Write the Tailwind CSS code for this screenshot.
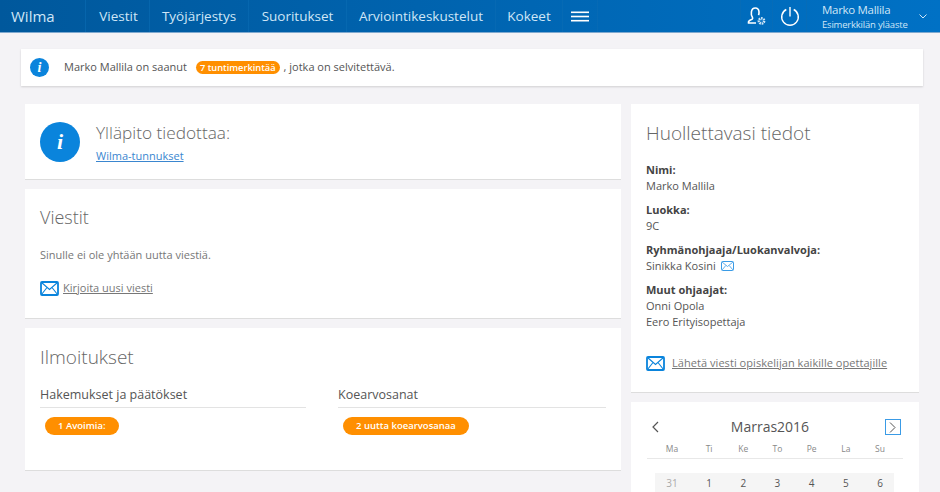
<!DOCTYPE html>
<html lang="fi">
<head>
    <meta charset="UTF-8">
    <title>Wilma</title>
    <script src="https://cdn.jsdelivr.net/npm/@tailwindcss/browser@4"></script>
</head>
<body class="h-[492px] overflow-hidden bg-[#f4f3f6] font-['Open_Sans',sans-serif] text-[11px] text-[#555]">
    <!-- Top bar -->
    <header class="flex h-[33px] border-b border-[#7fa9cf] bg-gradient-to-r from-[#00589c] to-[#0071c5] text-[13.5px] text-[#cfe6f7]">
        <a class="flex w-[86px] items-center border-r border-[#0a6cb4]/60 pl-[11px] text-[15px]">Wilma</a>
        <a class="flex w-[64px] items-center justify-center border-r border-[#0a6cb4]/60 pl-[2px]">Viestit</a>
        <a class="flex w-[99px] items-center justify-center border-r border-[#0a6cb4]/60">Työjärjestys</a>
        <a class="flex w-[98px] items-center justify-center border-r border-[#0a6cb4]/60">Suoritukset</a>
        <a class="flex w-[149px] items-center justify-center border-r border-[#0a6cb4]/60">Arviointikeskustelut</a>
        <a class="flex w-[67px] items-center justify-center border-r border-[#0a6cb4]/60">Kokeet</a>
        <a class="flex w-[35px] items-center justify-center border-r border-[#0a6cb4]/60">
            <svg width="18" height="11" viewBox="0 0 18 11" fill="#fff"><rect width="18" height="1.6" y="0.5"/><rect width="18" height="1.6" y="4.7"/><rect width="18" height="1.6" y="8.9"/></svg>
        </a>
        <div class="flex-1"></div>
        <a class="flex w-[33px] items-center justify-center border-x border-[#0a6cb4]/60">
            <svg width="21" height="21" viewBox="0 0 21 21" fill="none" stroke="#fff" stroke-width="1.6">
                <path d="M10 17H2.500c-.3-1.600.6-2.700 2.500-3.300 1.400-.4 1.900-1.100 1.500-2.200C5.500 10 5 8 5.400 5.800 5.800 3.500 7.400 2 9.300 2c2 0 3.500 1.500 3.700 3.800.1 1.300 0 2.300-.5 3.400"/>
                <circle cx="15.500" cy="15" r="2.600" stroke="#cfe6f7" stroke-width="2.600" stroke-dasharray="1.500 0.800"/>
                <circle cx="15.500" cy="15" r="1" fill="#1a7cc9" stroke="none"/>
            </svg>
        </a>
        <a class="flex w-[34px] items-center justify-center border-r border-[#0a6cb4]/60 pl-[1px]">
            <svg width="20" height="20" viewBox="0 0 20 20" fill="none" stroke="#fff" stroke-width="1.400">
                <path d="M6.300 3.500a8.300 8.300 0 1 0 7.400 0"/>
                <path d="M10 1v9.500"/>
            </svg>
        </a>
        <div class="flex w-[133px] items-center pl-[15px] pt-[1px]">
            <div class="w-[94px] leading-none">
                <div class="whitespace-nowrap text-[11.5px] leading-[15px] tracking-[-0.3px]">Marko Mallila</div>
                <div class="whitespace-nowrap text-[9.5px] leading-[15px] tracking-[-0.2px]">Esimerkkilän yläaste</div>
            </div>
            <svg class="ml-[3px]" width="8" height="5" viewBox="0 0 8 5" fill="none" stroke="#cfe6f7"><path d="M.5.500 4 4 7.500.500"/></svg>
        </div>
    </header>

    <!-- Notice -->
    <div class="ml-[21px] mt-4 flex h-[37px] w-[902px] items-center bg-white pl-[9px] shadow-[0_1px_2px_rgba(0,0,0,0.15)]">
        <span class="flex h-[19px] w-[19px] items-center justify-center rounded-full bg-[#0a84dc] font-['Liberation_Serif',serif] text-[14px] font-bold italic text-white">i</span>
        <span class="ml-[15px]">Marko Mallila on saanut</span>
        <span class="ml-[9px] rounded-full bg-[#ff8f00] px-[4px] text-[9.25px] font-semibold leading-[13px] text-white">7 tuntimerkintää</span>
        <span class="ml-[4px]">, jotka on selvitettävä.</span>
    </div>

    <div class="ml-[25px] mt-[18px] flex w-[894px] gap-[10px]">
        <!-- Left column -->
        <main class="flex w-[596px] flex-col gap-[10px]">
            <section class="flex h-[75px] items-center bg-white pl-[15px] shadow-[0_1px_0_#ddd]">
                <span class="flex h-10 w-10 items-center justify-center rounded-full bg-[#0a84dc] font-['Liberation_Serif',serif] text-[22px] font-bold italic text-white">i</span>
                <div class="ml-4">
                    <h2 class="text-[17.25px] font-light leading-[24px] text-[#666]">Ylläpito tiedottaa:</h2>
                    <a class="mt-[3px] block text-[11px] leading-[15px] text-[#3a86cf] underline">Wilma-tunnukset</a>
                </div>
            </section>

            <section class="h-[129px] bg-white pl-[15px] pt-[15px] shadow-[0_1px_0_#ddd]">
                <h2 class="text-[18px] font-light leading-[26px] text-[#666]">Viestit</h2>
                <p class="mt-[17px] leading-[16px] text-[#777]">Sinulle ei ole yhtään uutta viestiä.</p>
                <a class="mt-[17px] flex items-center text-[#777] underline">
                    <svg class="mr-[4px]" width="19" height="15" viewBox="0 0 19 15" fill="none" stroke="#0a84dc" stroke-width="1.800"><rect x="1" y="1" width="17" height="13" rx="1"/><path d="M1.500 1.500 9.500 8.500 17.500 1.500M1.500 13.500 7 6.500M17.500 13.500 12 6.500" stroke-width="1.100"/></svg>
                    Kirjoita uusi viesti
                </a>
            </section>

            <section class="h-[142px] bg-white px-[15px] pt-[16px] shadow-[0_1px_0_#ddd]">
                <h2 class="text-[19px] font-light leading-[26px] text-[#666]">Ilmoitukset</h2>
                <div class="mt-[16px] grid grid-cols-[266px_268px] gap-[32px]">
                    <div>
                        <h3 class="border-b border-[#e3e3e3] pb-[3px] text-[12.500px] leading-[18px] text-[#555]">Hakemukset ja päätökset</h3>
                        <span class="ml-[5px] mt-[9px] inline-block rounded-full bg-[#ff8f00] px-[13px] text-[9.500px] font-semibold leading-[18px] text-white">1 Avoimia:</span>
                    </div>
                    <div>
                        <h3 class="border-b border-[#e3e3e3] pb-[3px] text-[12.500px] leading-[18px] text-[#555]">Koearvosanat</h3>
                        <span class="ml-[5px] mt-[9px] inline-block rounded-full bg-[#ff8f00] px-[13px] text-[9.500px] font-semibold leading-[18px] text-white">2 uutta koearvosanaa</span>
                    </div>
                </div>
            </section>
        </main>

        <!-- Right column -->
        <aside class="flex w-[288px] flex-col gap-[10px]">
            <section class="h-[288px] bg-white pl-[15px] pr-4 pt-[16px] shadow-[0_1px_0_#ddd]">
                <h2 class="text-[19px] font-light leading-[26px] text-[#666]">Huollettavasi tiedot</h2>
                <dl class="mt-[16px] leading-[16px]">
                    <dt class="font-bold text-[#444]">Nimi:</dt>
                    <dd>Marko Mallila</dd>
                    <dt class="mt-[8px] font-bold text-[#444]">Luokka:</dt>
                    <dd>9C</dd>
                    <dt class="mt-[8px] font-bold text-[#444]">Ryhmänohjaaja/Luokanvalvoja:</dt>
                    <dd class="flex items-center">Sinikka Kosini
                        <svg class="ml-[5px]" width="13" height="10" viewBox="0 0 13 10" fill="none" stroke="#3a9be6"><rect x=".5" y=".5" width="12" height="9" rx="1"/><path d="M1 1 6.500 5.500 12 1M1 9 4.800 4.500M12 9 8.200 4.500" stroke-width=".8"/></svg>
                    </dd>
                    <dt class="mt-[8px] font-bold text-[#444]">Muut ohjaajat:</dt>
                    <dd>Onni Opola</dd>
                    <dd>Eero Erityisopettaja</dd>
                </dl>
                <a class="mt-[25px] flex items-center tracking-[0.05px] text-[#777] underline">
                    <svg class="mr-[7px]" width="19" height="15" viewBox="0 0 19 15" fill="none" stroke="#0a84dc" stroke-width="1.800"><rect x="1" y="1" width="17" height="13" rx="1"/><path d="M1.500 1.500 9.500 8.500 17.500 1.500M1.500 13.500 7 6.500M17.500 13.500 12 6.500" stroke-width="1.100"/></svg>
                    Lähetä viesti opiskelijan kaikille opettajille
                </a>
            </section>

            <!-- Calendar, cut off by the window as in the reference -->
            <section class="h-[90px] bg-white pt-[14px]">
                <div class="flex h-[22px] items-center justify-between pl-[20px] pr-[18px]">
                    <svg width="8" height="12" viewBox="0 0 8 12" fill="none" stroke="#555" stroke-width="1.200"><path d="M7 1 2 6l5 5"/></svg>
                    <span class="mr-[4px] text-[14px] leading-[20px] text-[#555]">Marras2016</span>
                    <span class="flex h-[16px] w-[16px] items-center justify-center border border-[#3a9be6]">
                        <svg width="7" height="11" viewBox="0 0 7 11" fill="none" stroke="#555"><path d="M1 .5 6 5.500 1 10.500"/></svg>
                    </span>
                </div>
                <div class="mx-4 mt-[5px] grid grid-cols-[37px_repeat(6,34.2px)] border-b border-[#e8e8e8] pb-[3px] pl-2 text-center text-[8.500px] leading-[12px] text-[#888]">
                    <span class="pr-[3px]">Ma</span><span>Ti</span><span>Ke</span><span>To</span><span>Pe</span><span>La</span><span>Su</span>
                </div>
                <div class="ml-[24px] mr-[25px] mt-[14px] grid grid-cols-[37px_repeat(6,34.2px)] bg-[#f5f5f5] pb-[2px] pt-[3px] text-center text-[10px] leading-[14px] text-[#555]">
                    <span class="pr-[3px] text-[#aaa]">31</span><span>1</span><span>2</span><span>3</span><span>4</span><span>5</span><span>6</span>
                </div>
            </section>
        </aside>
    </div>
</body>
</html>
